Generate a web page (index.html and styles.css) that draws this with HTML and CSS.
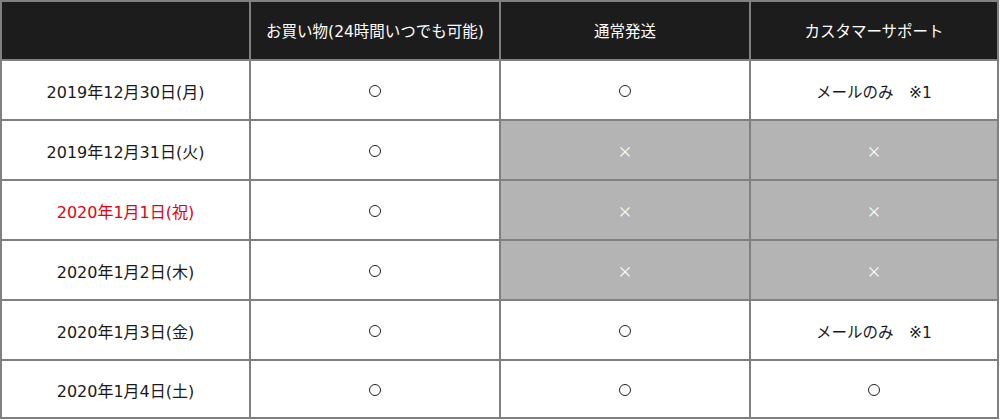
FILE: index.html
```html
<!DOCTYPE html>
<html lang="ja">
<head>
<meta charset="utf-8">
<link rel="stylesheet" href="styles.css">
</head>
<body>
<div class="table">
  <div class="cell head"></div>
  <div class="cell head">お買い物(24時間いつでも可能)</div>
  <div class="cell head">通常発送</div>
  <div class="cell head">カスタマーサポート</div>

  <div class="cell">2019年12月30日(月)</div>
  <div class="cell"><span class="ok"></span></div>
  <div class="cell"><span class="ok"></span></div>
  <div class="cell note">メールのみ　※1</div>

  <div class="cell">2019年12月31日(火)</div>
  <div class="cell"><span class="ok"></span></div>
  <div class="cell off">×</div>
  <div class="cell off">×</div>

  <div class="cell holiday">2020年1月1日(祝)</div>
  <div class="cell"><span class="ok"></span></div>
  <div class="cell off">×</div>
  <div class="cell off">×</div>

  <div class="cell">2020年1月2日(木)</div>
  <div class="cell"><span class="ok"></span></div>
  <div class="cell off">×</div>
  <div class="cell off">×</div>

  <div class="cell">2020年1月3日(金)</div>
  <div class="cell"><span class="ok"></span></div>
  <div class="cell"><span class="ok"></span></div>
  <div class="cell note">メールのみ　※1</div>

  <div class="cell">2020年1月4日(土)</div>
  <div class="cell"><span class="ok"></span></div>
  <div class="cell"><span class="ok"></span></div>
  <div class="cell"><span class="ok"></span></div>
</div>
</body>
</html>
```

FILE: styles.css
```css
html, body {
  margin: 0;
  padding: 0;
  background: #fff;
}
.table {
  display: grid;
  grid-template-columns: 249px 250px 250px 248px;
  grid-template-rows: 59px repeat(5, 60px) 58px;
  width: 997px;
  border-top: 2px solid #808080;
  border-left: 2px solid #808080;
  font-family: "DejaVu Sans", "Noto Sans CJK JP", sans-serif;
  font-size: 16px;
  color: #1a1a1a;
}
.cell {
  display: flex;
  align-items: center;
  justify-content: center;
  border-right: 2px solid #808080;
  border-bottom: 2px solid #808080;
  background: #fff;
  white-space: nowrap;
  padding-top: 1px;
}
.note {
  font-size: 15.5px;
}
.head {
  background: #1c1c1c;
  color: #fff;
  font-size: 15.5px;
  padding-top: 0;
  padding-bottom: 1px;
}
.off {
  background: #b4b4b4;
  color: #fff;
  font-family: "Noto Sans CJK JP", sans-serif;
  font-size: 15px;
}
.holiday {
  color: #e60012;
}
.ok {
  width: 10px;
  height: 10px;
  border: 1.6px solid #222;
  border-radius: 50%;
}
```
